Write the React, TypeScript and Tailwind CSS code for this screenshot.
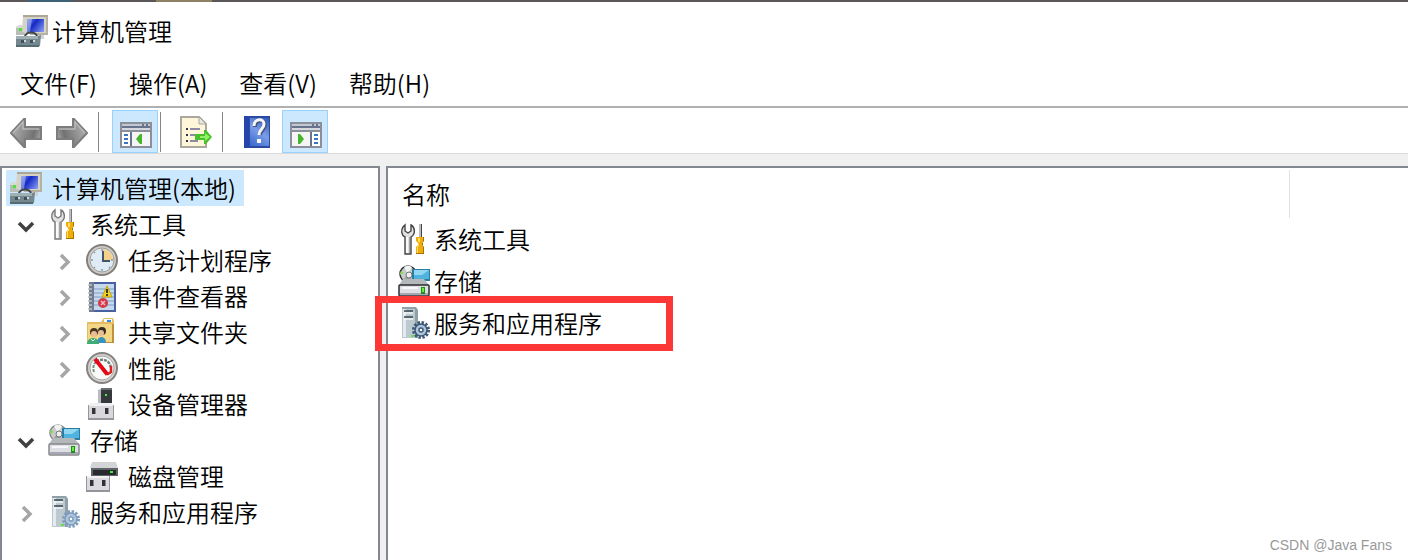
import type { ReactNode } from "react";

type IconProps = { className?: string };

function Icon({ className = "", children }: { className?: string; children: ReactNode }) {
  return (
    <svg viewBox="0 0 32 32" className={`size-8 shrink-0 ${className}`} fill="none" aria-hidden="true">
      {children}
    </svg>
  );
}

function ComputerIcon({ className }: IconProps) {
  return (
    <Icon className={className}>
      <path d="M0 12l4-2h5v10H0z" fill="#b9bdb8" />
      <path d="M0 12l4-2h3v3H0z" fill="#d8dad6" />
      <rect x="3" y="13" width="3" height="3" fill="#4be03a" />
      <path d="M7 0h25v19H14l-8-2z" fill="#d6d2c4" />
      <path d="M7 0h25v2H7z" fill="#aaa698" />
      <path d="M30 1h2v18h-2zM14 18h18v2H14z" fill="#b5b1a3" />
      <path d="M11 4h17v13H11z" fill="url(#screen)" />
      <path d="M11 4h5l-2 13h-3z" fill="#a9bbf5" opacity=".6" />
      <path d="M22 20h6v4h-6z" fill="#d2d2d2" />
      <path d="M9 22c0-6 12-6 12 0" stroke="#3d464b" strokeWidth="2" />
      <path d="M0 21h22l3-1-1 11-3 1H0z" fill="#73888f" />
      <path d="M0 21h22v3H0z" fill="#9fb0b5" />
      <path d="M0 30h23v2H0z" fill="#566a72" />
      <path d="M5 25h3v3H5zM14 25h3v3h-3z" fill="#414f56" />
      <path d="M8 25h2v2H8zM17 25h2v2h-2z" fill="#cfd8db" />
      <defs>
        <linearGradient id="screen" x1="11" y1="4" x2="28" y2="17" gradientUnits="userSpaceOnUse">
          <stop stopColor="#7f97f0" />
          <stop offset=".4" stopColor="#1529c4" />
          <stop offset="1" stopColor="#8ea2f5" />
        </linearGradient>
      </defs>
    </Icon>
  );
}

function ToolsIcon({ className }: IconProps) {
  return (
    <Icon className={className}>
      <path
        d="M7 31V14c-4-2-4-7-2-10l2-2v6l3 2 3-2V2c4 2 5 9 0 12v17z"
        fill="#e1e1e1"
        stroke="currentColor"
        strokeWidth="1.4"
      />
      <path d="M8 14h2v16H8z" fill="#fafafa" />
      <path d="M11 14h1v16h-1z" fill="#a2a2a2" />
      <path d="M21 1h3v13h-3z" fill="#bcbcbc" />
      <path d="M23 1h1v13h-1z" fill="currentColor" />
      <path d="M18 14h8v4l-2 2v2l2 2v7H18v-7l2-2v-2l-2-2z" fill="#efad09" />
      <path d="M20 15h2v4h-1v4h-1v7h-1v-7l2-3-1-2z" fill="#ffe169" />
      <path d="M25 14h1v4l-2 2v2l2 2v7H18v-1h7z" fill="#a87200" />
    </Icon>
  );
}

function ClockIcon() {
  return (
    <Icon>
      <circle cx="16" cy="16" r="15" fill="#cfccc7" stroke="#827f7b" strokeWidth="2" />
      <circle cx="16" cy="16" r="12" fill="#dfebf5" stroke="#a19d98" />
      <path d="M16 16V5a11 11 0 0 1 11 11z" fill="#f4d08a" />
      <path d="M16 5v2M16 25v2M5 16h2M25 16h2M8 8l1 1M8 24l1-1M24 24l-1-1" stroke="#8799a9" strokeWidth="1.5" />
      <path d="M17 7v10M16 17h8" stroke="#42566a" strokeWidth="2" />
    </Icon>
  );
}

function EventIcon() {
  return (
    <Icon>
      <path d="M5 2h25v30H5z" fill="#4861a0" />
      <path d="M8 4h20v26H8z" fill="#c6d9ec" />
      <path d="M8 9h20M8 13h20M8 17h20M8 21h20M8 25h20" stroke="#7d9dc6" />
      <path d="M3 2h5v30H3z" fill="#717b8b" />
      <path d="M2 5h4M2 9h4M2 13h4M2 17h4M2 21h4M2 25h4M2 29h4" stroke="#bcc2cb" strokeWidth="1.5" />
      <path d="M21 6l5 11H16z" fill="#f0d420" stroke="#c3a518" />
      <path d="M21 9v4M21 14v2" stroke="#453d0a" strokeWidth="2" />
      <circle cx="17" cy="23" r="5" fill="#d33a48" />
      <path d="M15 21l4 4M19 21l-4 4" stroke="#f3b9bf" strokeWidth="1.5" />
    </Icon>
  );
}

function FolderIcon() {
  return (
    <Icon>
      <path d="M1 6h14l3-4h9l1 3v22H1z" fill="#e5bc61" />
      <path d="M2 8h24v18H2z" fill="#f4d786" />
      <path d="M18 3h8v3h-8z" fill="#fff" />
      <path d="M21 4h4v2h-4z" fill="#348ddb" />
      <path d="M26 8h2v19H2v-1h24z" fill="#be913d" />
      <circle cx="8" cy="16" r="4" fill="#4a3422" />
      <circle cx="8" cy="18" r="3" fill="#eabd94" />
      <circle cx="16" cy="15" r="4" fill="#372c24" />
      <circle cx="15" cy="17" r="3" fill="#eabd94" />
      <path d="M11 27c0-8 9-8 9 0z" fill="#3b91bd" />
      <path d="M1 28c0-8 12-8 12 0z" fill="#3fac75" />
      <path d="M5 23l2 2 2-2" stroke="#e7f8ef" />
    </Icon>
  );
}

function GaugeIcon() {
  return (
    <Icon>
      <circle cx="16" cy="16" r="15" fill="#d4d2cf" stroke="#858280" strokeWidth="2" />
      <circle cx="16" cy="16" r="12" fill="#f8faf9" stroke="#a7a4a1" />
      <path d="M8 20c-2-6 1-11 5-12" stroke="#789080" strokeWidth="2" strokeDasharray="3 1" />
      <path d="M14 8c6-1 10 2 11 8" stroke="#718278" strokeWidth="2.5" strokeDasharray="3 1" />
      <path d="M25 14v6l-3 2h-3" stroke="#df2026" strokeWidth="2.5" />
      <path d="M9 7l12 15" stroke="#e30815" strokeWidth="4" />
    </Icon>
  );
}

function DeviceIcon() {
  return (
    <Icon>
      <path d="M12 2l5-2v16h-5z" fill="#b9bbbe" />
      <path d="M15 0h11v16H15z" fill="#36393c" />
      <path d="M15 0h11v2H15z" fill="#686c70" />
      <path d="M19 6h2v2h-2z" fill="#47ef47" />
      <path d="M2 17h26v15H2z" fill="#d7d7dc" />
      <path d="M4 15h22l2 3H2z" fill="#f0f0f3" />
      <path d="M2 17h1v14H2zM27 17h1v14h-1zM2 30h26v2H2z" fill="#96969c" />
      <path d="M6 20h4v6H6zM19 20h4v6h-4z" fill="#333539" />
      <path d="M9 20h1v6H9zM22 20h1v6h-1z" fill="#8b8d92" />
    </Icon>
  );
}

function StorageIcon({ className }: IconProps) {
  return (
    <Icon className={className}>
      <circle cx="10" cy="9" r="8" fill="#c8cbcb" stroke="currentColor" strokeWidth="1.5" />
      <path d="M6 8L3 6c-1 1-1 2-1 4z" fill="#8fd45e" />
      <path d="M10 9l4-7c-3-2-6-1-8 0z" fill="#f1f2f2" />
      <path d="M10 9l-5 6c3 2 7 2 9 0z" fill="#9b9e9f" />
      <circle cx="11" cy="10" r="3" fill="#eee" stroke="#747778" />
      <path d="M14 4h18v12H14z" fill="#2b7ca1" />
      <path d="M16 5h15v9H16z" fill="#4eb4df" />
      <path d="M16 5h15l-7 5h-8z" fill="#91d7f2" />
      <path d="M5 14h21l5 6H1z" fill="#b5b8bb" />
      <rect x="1" y="20" width="30" height="11" rx="1" fill="#dedee5" stroke="currentColor" strokeWidth="1.5" />
      <path d="M4 22h16v2H4z" fill="#f8f8fb" />
      <path d="M2 28h28v2H2z" fill="#a6a6b4" />
      <path d="M23 22h4v7h-4z" fill="#238c19" />
      <path d="M24 23h2v4h-2z" fill="#65ee3d" />
    </Icon>
  );
}

function DiskIcon() {
  return (
    <Icon>
      <path d="M6 2h24l2 6H4z" fill="#d3d4d6" />
      <path d="M5 8h27v8H5z" fill="#5f6366" />
      <path d="M7 10h23v5H7z" fill="#282b2d" />
      <path d="M24 11h3v2h-3z" fill="#45ed38" />
      <path d="M0 16h24v16H0z" fill="#dadadf" />
      <path d="M1 16h22v2H1z" fill="#f2f2f5" />
      <path d="M0 16h1v15H0zM23 16h1v15h-1zM0 30h24v2H0z" fill="#94949b" />
      <path d="M4 20h4v6H4zM16 20h4v6h-4z" fill="#303236" />
      <path d="M7 20h1v6H7zM19 20h1v6h-1z" fill="#85878b" />
    </Icon>
  );
}

function ServicesIcon({ className }: IconProps) {
  return (
    <Icon className={className}>
      <path d="M4 1h14v30H4z" fill="#bcc9cf" />
      <path d="M4 0h14l2 3v28h-3V2H4z" fill="#8fa0a9" />
      <path d="M5 2h3v28H5z" fill="#e3ebee" />
      <path d="M6 4h9M6 10h9" stroke="#36454c" strokeWidth="1.5" />
      <path d="M6 6h9M6 12h9" stroke="#f2f6f8" strokeWidth="1.5" />
      <path d="M13 28h3v2h-3z" fill="#66df49" />
      <circle cx="23" cy="23" r="7" stroke="currentColor" strokeWidth="4" strokeDasharray="2.2 1.5" />
      <circle cx="23" cy="23" r="6" fill="#adc5dd" stroke="currentColor" strokeWidth="1.5" />
      <circle cx="23" cy="23" r="2" fill="#fff" stroke="currentColor" strokeWidth="1.5" />
    </Icon>
  );
}

function ArrowIcon({ className }: IconProps) {
  return (
    <Icon className={className}>
      <path d="M1 17L14 3h1v8h16v12H15v8h-1z" fill="url(#arrow)" stroke="#7d7d7d" strokeWidth="2" />
      <path d="M3 17L13 6v7h16" stroke="#b8b8b8" strokeWidth="1.5" />
      <defs>
        <linearGradient id="arrow" x1="1" y1="12" x2="31" y2="22" gradientUnits="userSpaceOnUse">
          <stop stopColor="#b3b3b3" />
          <stop offset=".75" stopColor="#727272" />
          <stop offset="1" stopColor="#a6a6a6" />
        </linearGradient>
      </defs>
    </Icon>
  );
}

function PaneIcon({ side }: { side: "left" | "right" }) {
  return (
    <Icon>
      <path d="M0 5h32v26H0z" fill="#8a8f99" />
      <path d="M2 7h28v2H2z" fill="#c3c8d1" />
      <path d="M22 7h2v2h-2zM26 7h2v2h-2z" fill="#68748d" />
      <path d="M2 9h28v2H2z" fill="#68748d" />
      <path d="M2 11h28v2H2z" fill="#d5d9df" />
      <path d="M2 15h28v14H2z" fill="#f5f5f5" />
      {side === "left" ? (
        <>
          <path d="M2 15h8v14H2z" fill="#fff" />
          <path d="M10 15h2v14h-2z" fill="#68748d" />
          <path d="M4 18h4M4 22h4M4 26h4" stroke="#3a78bd" strokeWidth="2" />
          <path d="M22 17v10h-2l-4-5 4-5z" fill="#43b62c" />
        </>
      ) : (
        <>
          <path d="M22 15h8v14h-8z" fill="#fff" />
          <path d="M20 15h2v14h-2z" fill="#68748d" />
          <path d="M24 18h4M24 22h4M24 26h4" stroke="#3a78bd" strokeWidth="2" />
          <path d="M8 17v10h2l4-5-4-5z" fill="#43b62c" />
        </>
      )}
    </Icon>
  );
}

function ExportIcon() {
  return (
    <Icon>
      <path d="M1 1h18l7 7v23H1z" fill="#fdf6d8" stroke="#aaa89c" strokeWidth="2" />
      <path d="M19 1v7h7z" fill="#e6e6e6" stroke="#aaa89c" />
      <path d="M6 12h2v2H6zM6 18h2v2H6zM6 24h2v2H6z" fill="#32334a" />
      <path d="M10 13h10M10 19h8M10 25h8" stroke="#8e89a6" strokeWidth="2" />
      <path d="M15 18h9v-4h2l6 7-6 7h-2v-4h-9z" fill="#49bf2b" />
      <path d="M20 20h5v-3l5 4-5 4v-3h-5z" fill="#8ff264" />
    </Icon>
  );
}

function HelpIcon() {
  return (
    <Icon>
      <path d="M3 0h26v32H3z" fill="#2c4b9f" />
      <path d="M9 2h19v28H9z" fill="url(#help)" />
      <path d="M3 0h5v32H3z" fill="#2545ad" />
      <path d="M14 11c0-8 10-8 10-2 0 5-5 5-5 10" stroke="#48577e" strokeWidth="4" />
      <path d="M13 10c0-8 10-8 10-2 0 5-5 5-5 11" stroke="#f7f7fa" strokeWidth="3" />
      <path d="M16 23h4v4h-4z" fill="#f7f7fa" />
      <defs>
        <linearGradient id="help" x1="28" y1="2" x2="9" y2="30" gradientUnits="userSpaceOnUse">
          <stop stopColor="#2c58bd" />
          <stop offset=".5" stopColor="#7a9ce8" />
          <stop offset="1" stopColor="#3765cd" />
        </linearGradient>
      </defs>
    </Icon>
  );
}

function Chevron({ open }: { open: boolean }) {
  return (
    <Icon className={open ? "text-[#404040]" : "text-[#a6a6a6]"}>
      <path
        d={open ? "M9 15l7 7 7-7" : "M13 11l7 7-7 7"}
        stroke="currentColor"
        strokeWidth="3.5"
      />
    </Icon>
  );
}

type TreeNode = {
  label: string;
  icon: ReactNode;
  open?: boolean;
  children?: TreeNode[];
};

const tree: TreeNode[] = [
  {
    label: "系统工具",
    icon: <ToolsIcon className="text-[#777777]" />,
    open: true,
    children: [
      { label: "任务计划程序", icon: <ClockIcon />, open: false },
      { label: "事件查看器", icon: <EventIcon />, open: false },
      { label: "共享文件夹", icon: <FolderIcon />, open: false },
      { label: "性能", icon: <GaugeIcon />, open: false },
      { label: "设备管理器", icon: <DeviceIcon /> },
    ],
  },
  {
    label: "存储",
    icon: <StorageIcon className="text-[#85888b]" />,
    open: true,
    children: [{ label: "磁盘管理", icon: <DiskIcon /> }],
  },
  { label: "服务和应用程序", icon: <ServicesIcon className="text-[#7f9cbd]" />, open: false },
];

const items = [
  { label: "系统工具", icon: <ToolsIcon className="text-[#444444]" /> },
  { label: "存储", icon: <StorageIcon className="text-[#2b2d2f]" /> },
  { label: "服务和应用程序", icon: <ServicesIcon className="text-[#3d5876]" />, marked: true },
];

function TreeItem({ node }: { node: TreeNode }) {
  return (
    <li>
      <button type="button" aria-expanded={node.open} className="flex h-9 items-center pl-1">
        {node.open === undefined ? <span className="w-8" /> : <Chevron open={node.open} />}
        <span className="ml-1.5">{node.icon}</span>
        <span className="ml-2.5 whitespace-nowrap">{node.label}</span>
      </button>
      {node.children && (
        <ul className="pl-[38px]">
          {node.children.map((child) => (
            <TreeItem key={child.label} node={child} />
          ))}
        </ul>
      )}
    </li>
  );
}

function Separator() {
  return <span className="mt-0.5 h-10 w-px bg-[#858585]" />;
}

export default function App() {
  return (
    <div className="relative flex min-h-screen flex-col bg-[#f0f0f0] font-['Noto_Sans_CJK_SC',sans-serif] text-2xl leading-9 font-[350] text-black">
      <header className="bg-white">
        <div className="flex h-0.5 bg-[#5b5758]">
          <span className="ml-7 w-11 bg-[#3d6177]" />
          <span className="ml-21 w-14 bg-[#8f8163]" />
        </div>
        <div className="flex h-[58px] items-center gap-1 pl-4">
          <ComputerIcon />
          <h1 className="font-[350]">计算机管理</h1>
        </div>
        <nav className="flex h-[46px] items-center gap-8 pl-5">
          <button type="button">文件(F)</button>
          <button type="button">操作(A)</button>
          <button type="button">查看(V)</button>
          <button type="button">帮助(H)</button>
        </nav>
      </header>

      <div className="flex h-12 items-start border-t-2 border-b border-t-[#b0b0b0] border-b-[#d9d9d9] bg-white pt-0.5 pl-2.5">
        <button type="button" aria-label="后退" className="mt-1.5">
          <ArrowIcon />
        </button>
        <button type="button" aria-label="前进" className="mt-1.5 mr-2.5 ml-3.5">
          <ArrowIcon className="-scale-x-100" />
        </button>
        <Separator />
        <button
          type="button"
          aria-label="显示/隐藏控制台树"
          className="mr-0.5 ml-[13px] border border-[#99d1ff] bg-[#cce8ff] pt-1.5 pr-[5px] pb-[3px] pl-[7px]"
        >
          <PaneIcon side="left" />
        </button>
        <Separator />
        <button type="button" aria-label="导出列表" className="mt-1.5 mr-2.5 ml-[19px]">
          <ExportIcon />
        </button>
        <Separator />
        <button type="button" aria-label="帮助" className="mt-1.5 mr-[9px] ml-[18px]">
          <HelpIcon />
        </button>
        <button
          type="button"
          aria-label="显示/隐藏操作窗格"
          className="border border-[#99d1ff] bg-[#cce8ff] pt-1.5 pr-[5px] pb-[3px] pl-[7px]"
        >
          <PaneIcon side="right" />
        </button>
      </div>

      <main className="flex flex-1 gap-1.5 pt-3">
        <aside className="w-[380px] shrink-0 border-2 border-b-0 border-[#828790] bg-white px-1 pt-0.5">
          <button type="button" className="flex h-9 items-center gap-2.5 bg-[#cce8ff] pr-2 pl-1">
            <ComputerIcon />
            计算机管理(本地)
          </button>
          <ul>
            {tree.map((node) => (
              <TreeItem key={node.label} node={node} />
            ))}
          </ul>
        </aside>

        <section className="flex-1 border-t-2 border-l-2 border-[#828790] bg-white pt-0.5">
          <table className="w-full">
            <thead>
              <tr className="h-12">
                <th scope="col" className="border-r border-[#e2e2e2] pl-3.5 text-left font-[350]">
                  名称
                </th>
                <td className="w-[119px]" />
              </tr>
            </thead>
            <tbody>
              {items.map((item) => (
                <tr key={item.label} className="h-[42px]">
                  <td colSpan={2} className="relative pl-2.5">
                    <div className="flex items-center gap-1">
                      {item.icon}
                      {item.label}
                    </div>
                    {item.marked && (
                      <span className="pointer-events-none absolute -top-1.5 -bottom-[7px] -left-[13px] w-[298px] border-7 border-[#fd3636]" />
                    )}
                  </td>
                </tr>
              ))}
            </tbody>
          </table>
        </section>
      </main>

      <p className="absolute right-4 bottom-[3px] font-['Liberation_Sans',sans-serif] text-sm leading-6 font-normal text-[#999999]">
        CSDN @Java Fans
      </p>
    </div>
  );
}
